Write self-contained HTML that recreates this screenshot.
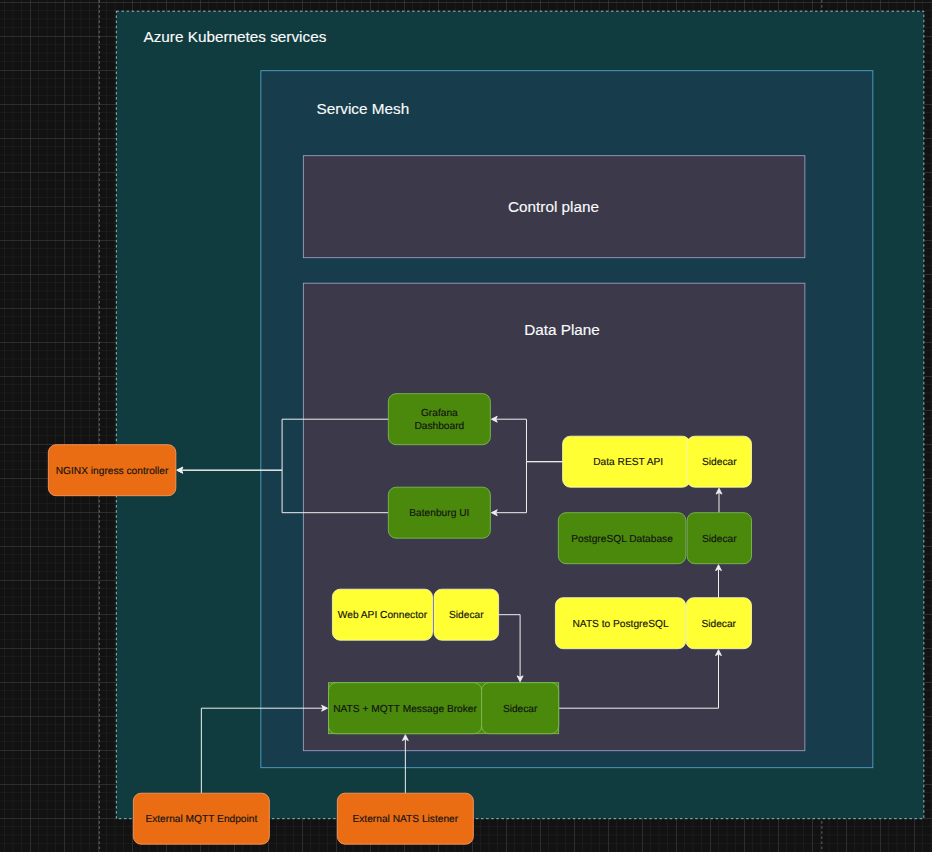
<!DOCTYPE html>
<html lang="en">
<head>
<meta charset="utf-8">
<title>Azure Kubernetes services - Service Mesh diagram</title>
<style>
html,body{margin:0;padding:0;background:#121212;}
body{width:932px;height:852px;overflow:hidden;position:relative;}
svg{position:absolute;left:0;top:0;display:block;}
svg text{font-family:"Liberation Sans",Arial,Helvetica,sans-serif;}
</style>
</head>
<body>
<svg width="932" height="852" viewBox="0 0 932 852">
<defs>
<pattern id="grid" x="30" y="2" width="34" height="34" patternUnits="userSpaceOnUse">
<path d="M 0 8.5 L 34 8.5 M 8.5 0 L 8.5 34 M 0 17 L 34 17 M 17 0 L 17 34 M 0 25.5 L 34 25.5 M 25.5 0 L 25.5 34" fill="none" stroke="#424242" opacity="0.18" stroke-width="1"/>
<path d="M 34 0.5 L 0 0.5 M 0.5 0 L 0.5 34" fill="none" stroke="#424242" opacity="0.56" stroke-width="1"/>
</pattern>
</defs>
<rect width="932" height="852" fill="#121212"/>
<rect width="932" height="852" fill="url(#grid)"/>
<path d="M 99.35 0 L 99.35 852 M 821.85 0 L 821.85 852" fill="none" stroke="#747474" stroke-width="0.85" stroke-dasharray="2.55 2.55"/>
<rect x="116.35" y="11.20" width="807.50" height="807.50" fill="#103c3f" stroke="#a9d2cd" stroke-width="0.85" stroke-dasharray="2.55 2.55"/>
<text x="143.50" y="42.00" font-size="15.3" fill="#fafafa" stroke="#fafafa" stroke-width="0.15" text-anchor="start">Azure Kubernetes services</text>
<rect x="260.85" y="70.70" width="612.00" height="697.00" fill="#173d4d" stroke="#54a9ce" stroke-width="0.85"/>
<text x="316.50" y="114.00" font-size="15.3" fill="#fafafa" stroke="#fafafa" stroke-width="0.15" text-anchor="start">Service Mesh</text>
<rect x="303.35" y="155.70" width="501.50" height="102.00" fill="#3b394a" stroke="#a0a2c8" stroke-width="0.85"/>
<text x="553.50" y="212.00" font-size="15.3" fill="#fafafa" stroke="#fafafa" stroke-width="0.15" text-anchor="middle">Control plane</text>
<rect x="303.35" y="283.20" width="501.50" height="467.50" fill="#3b394a" stroke="#a0a2c8" stroke-width="0.85"/>
<text x="562.00" y="335.00" font-size="15.3" fill="#fafafa" stroke="#fafafa" stroke-width="0.15" text-anchor="middle">Data Plane</text>
<path d="M 388.35 419.20 L 282.10 419.20 L 282.10 470.20 L 181.26 470.20" fill="none" stroke="#f0f0f0" stroke-width="1" stroke-miterlimit="10"/>
<path d="M 176.80 470.20 L 182.75 467.22 L 181.26 470.20 L 182.75 473.18 Z" fill="#f0f0f0" stroke="#f0f0f0" stroke-width="0.85" stroke-miterlimit="10"/>
<path d="M 388.35 512.70 L 282.10 512.70 L 282.10 470.20 L 181.26 470.20" fill="none" stroke="#f0f0f0" stroke-width="1" stroke-miterlimit="10"/>
<path d="M 176.80 470.20 L 182.75 467.22 L 181.26 470.20 L 182.75 473.18 Z" fill="#f0f0f0" stroke="#f0f0f0" stroke-width="0.85" stroke-miterlimit="10"/>
<path d="M 562.60 461.70 L 526.48 461.70 L 526.48 419.20 L 495.76 419.20" fill="none" stroke="#f0f0f0" stroke-width="1" stroke-miterlimit="10"/>
<path d="M 491.30 419.20 L 497.25 416.22 L 495.76 419.20 L 497.25 422.18 Z" fill="#f0f0f0" stroke="#f0f0f0" stroke-width="0.85" stroke-miterlimit="10"/>
<path d="M 562.60 461.70 L 526.48 461.70 L 526.48 512.70 L 495.76 512.70" fill="none" stroke="#f0f0f0" stroke-width="1" stroke-miterlimit="10"/>
<path d="M 491.30 512.70 L 497.25 509.73 L 495.76 512.70 L 497.25 515.68 Z" fill="#f0f0f0" stroke="#f0f0f0" stroke-width="0.85" stroke-miterlimit="10"/>
<path d="M 719.00 512.70 L 719.00 492.61" fill="none" stroke="#f0f0f0" stroke-width="1" stroke-miterlimit="10"/>
<path d="M 719.00 488.15 L 721.98 494.10 L 719.00 492.61 L 716.02 494.10 Z" fill="#f0f0f0" stroke="#f0f0f0" stroke-width="0.85" stroke-miterlimit="10"/>
<path d="M 718.50 597.70 L 718.50 569.11" fill="none" stroke="#f0f0f0" stroke-width="1" stroke-miterlimit="10"/>
<path d="M 718.50 564.65 L 721.48 570.60 L 718.50 569.11 L 715.52 570.60 Z" fill="#f0f0f0" stroke="#f0f0f0" stroke-width="0.85" stroke-miterlimit="10"/>
<path d="M 498.60 614.70 L 520.10 614.70 L 520.10 677.29" fill="none" stroke="#f0f0f0" stroke-width="1" stroke-miterlimit="10"/>
<path d="M 520.10 681.75 L 517.12 675.80 L 520.10 677.29 L 523.08 675.80 Z" fill="#f0f0f0" stroke="#f0f0f0" stroke-width="0.85" stroke-miterlimit="10"/>
<path d="M 558.70 708.20 L 718.50 708.20 L 718.50 654.11" fill="none" stroke="#f0f0f0" stroke-width="1" stroke-miterlimit="10"/>
<path d="M 718.50 649.65 L 721.48 655.60 L 718.50 654.11 L 715.52 655.60 Z" fill="#f0f0f0" stroke="#f0f0f0" stroke-width="0.85" stroke-miterlimit="10"/>
<path d="M 201.35 793.20 L 201.35 708.20 L 323.09 708.20" fill="none" stroke="#f0f0f0" stroke-width="1" stroke-miterlimit="10"/>
<path d="M 327.55 708.20 L 321.60 711.18 L 323.09 708.20 L 321.60 705.23 Z" fill="#f0f0f0" stroke="#f0f0f0" stroke-width="0.85" stroke-miterlimit="10"/>
<path d="M 405.35 793.20 L 405.35 739.11" fill="none" stroke="#f0f0f0" stroke-width="1" stroke-miterlimit="10"/>
<path d="M 405.35 734.65 L 408.33 740.60 L 405.35 739.11 L 402.38 740.60 Z" fill="#f0f0f0" stroke="#f0f0f0" stroke-width="0.85" stroke-miterlimit="10"/>
<rect x="48.35" y="444.70" width="127.50" height="51.00" rx="7.65" ry="7.65" fill="#eb6d13" stroke="#fb9c68" stroke-width="0.85"/>
<text x="112.10" y="474.00" font-size="10.2" fill="#121212" stroke="#121212" stroke-width="0.14" text-rendering="geometricPrecision" text-anchor="middle">NGINX ingress controller</text>
<rect x="133.35" y="793.20" width="136.00" height="51.00" rx="7.65" ry="7.65" fill="#eb6d13" stroke="#fb9c68" stroke-width="0.85"/>
<text x="201.35" y="822.00" font-size="10.2" fill="#121212" stroke="#121212" stroke-width="0.14" text-rendering="geometricPrecision" text-anchor="middle">External MQTT Endpoint</text>
<rect x="337.35" y="793.20" width="136.00" height="51.00" rx="7.65" ry="7.65" fill="#eb6d13" stroke="#fb9c68" stroke-width="0.85"/>
<text x="405.35" y="822.00" font-size="10.2" fill="#121212" stroke="#121212" stroke-width="0.14" text-rendering="geometricPrecision" text-anchor="middle">External NATS Listener</text>
<rect x="388.35" y="393.70" width="102.00" height="51.00" rx="7.65" ry="7.65" fill="#4a890b" stroke="#80be55" stroke-width="0.85"/>
<text x="439.35" y="416.00" font-size="10.2" fill="#121212" stroke="#121212" stroke-width="0.14" text-rendering="geometricPrecision" text-anchor="middle">Grafana</text>
<text x="439.35" y="429.00" font-size="10.2" fill="#121212" stroke="#121212" stroke-width="0.14" text-rendering="geometricPrecision" text-anchor="middle">Dashboard</text>
<rect x="388.35" y="487.20" width="102.00" height="51.00" rx="7.65" ry="7.65" fill="#4a890b" stroke="#80be55" stroke-width="0.85"/>
<text x="439.35" y="516.00" font-size="10.2" fill="#121212" stroke="#121212" stroke-width="0.14" text-rendering="geometricPrecision" text-anchor="middle">Batenburg UI</text>
<rect x="562.60" y="436.20" width="127.50" height="51.00" rx="7.65" ry="7.65" fill="#ffff33" stroke="#f6f6c0" stroke-width="0.85"/>
<text x="628.20" y="465.00" font-size="10.2" fill="#121212" stroke="#121212" stroke-width="0.14" text-rendering="geometricPrecision" text-anchor="middle">Data REST API</text>
<rect x="687.10" y="436.20" width="64.40" height="51.00" rx="7.65" ry="7.65" fill="#ffff33" stroke="#f6f6c0" stroke-width="0.85"/>
<text x="719.30" y="465.00" font-size="10.2" fill="#121212" stroke="#121212" stroke-width="0.14" text-rendering="geometricPrecision" text-anchor="middle">Sidecar</text>
<rect x="558.35" y="512.70" width="127.50" height="51.00" rx="7.65" ry="7.65" fill="#4a890b" stroke="#80be55" stroke-width="0.85"/>
<text x="622.10" y="542.00" font-size="10.2" fill="#121212" stroke="#121212" stroke-width="0.14" text-rendering="geometricPrecision" text-anchor="middle">PostgreSQL Database</text>
<rect x="687.10" y="512.70" width="64.40" height="51.00" rx="7.65" ry="7.65" fill="#4a890b" stroke="#80be55" stroke-width="0.85"/>
<text x="719.30" y="542.00" font-size="10.2" fill="#121212" stroke="#121212" stroke-width="0.14" text-rendering="geometricPrecision" text-anchor="middle">Sidecar</text>
<rect x="555.40" y="597.70" width="130.30" height="51.00" rx="7.65" ry="7.65" fill="#ffff33" stroke="#f6f6c0" stroke-width="0.85"/>
<text x="620.55" y="627.00" font-size="10.2" fill="#121212" stroke="#121212" stroke-width="0.14" text-rendering="geometricPrecision" text-anchor="middle">NATS to PostgreSQL</text>
<rect x="686.00" y="597.70" width="65.50" height="51.00" rx="7.65" ry="7.65" fill="#ffff33" stroke="#f6f6c0" stroke-width="0.85"/>
<text x="718.75" y="627.00" font-size="10.2" fill="#121212" stroke="#121212" stroke-width="0.14" text-rendering="geometricPrecision" text-anchor="middle">Sidecar</text>
<rect x="332.40" y="589.20" width="100.10" height="51.00" rx="7.65" ry="7.65" fill="#ffff33" stroke="#f6f6c0" stroke-width="0.85"/>
<text x="382.45" y="618.00" font-size="10.2" fill="#121212" stroke="#121212" stroke-width="0.14" text-rendering="geometricPrecision" text-anchor="middle">Web API Connector</text>
<rect x="434.00" y="589.20" width="64.60" height="51.00" rx="7.65" ry="7.65" fill="#ffff33" stroke="#f6f6c0" stroke-width="0.85"/>
<text x="466.30" y="618.00" font-size="10.2" fill="#121212" stroke="#121212" stroke-width="0.14" text-rendering="geometricPrecision" text-anchor="middle">Sidecar</text>
<rect x="328.50" y="682.70" width="230.20" height="51.00" fill="#4a890b" stroke="#80be55" stroke-width="0.85"/>
<rect x="328.50" y="682.70" width="153.10" height="51.00" rx="7.65" ry="7.65" fill="#4a890b" stroke="#80be55" stroke-width="0.85"/>
<text x="405.05" y="712.00" font-size="10.2" fill="#121212" stroke="#121212" stroke-width="0.14" text-rendering="geometricPrecision" text-anchor="middle">NATS + MQTT Message Broker</text>
<rect x="481.60" y="682.70" width="77.10" height="51.00" rx="7.65" ry="7.65" fill="#4a890b" stroke="#80be55" stroke-width="0.85"/>
<text x="520.15" y="712.00" font-size="10.2" fill="#121212" stroke="#121212" stroke-width="0.14" text-rendering="geometricPrecision" text-anchor="middle">Sidecar</text>
</svg>
</body>
</html>
